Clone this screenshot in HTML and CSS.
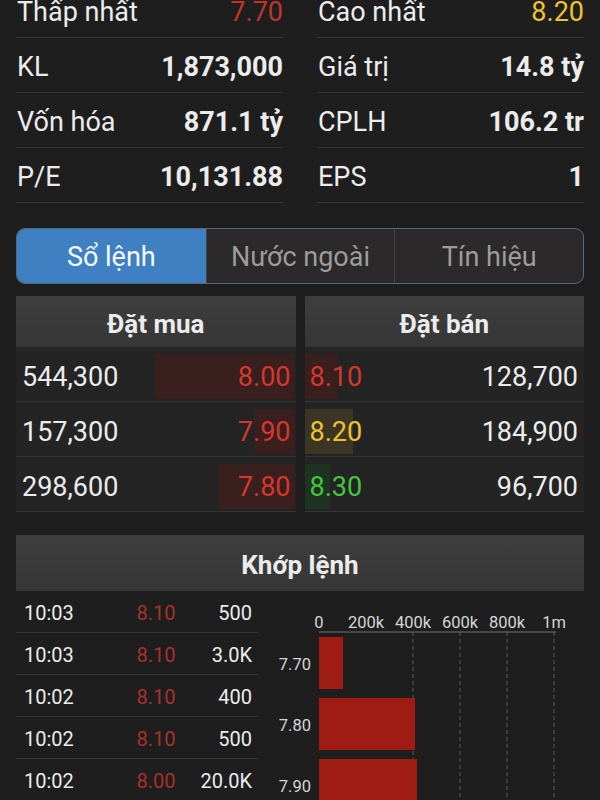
FILE: index.html
```html
<!DOCTYPE html>
<html lang="vi">
<head>
    <meta charset="UTF-8">
    <meta name="viewport" content="width=device-width, initial-scale=1.0">
    <title>Chi tiết mã</title>
    <link rel="stylesheet" href="styles.css">
</head>
<body>
    <div class="screen">
        <div class="stats">
            <div class="stat"><span class="label">Thấp nhất</span><span class="value down">7.70</span></div>
            <div class="stat"><span class="label">Cao nhất</span><span class="value ref">8.20</span></div>
            <div class="stat"><span class="label">KL</span><span class="value">1,873,000</span></div>
            <div class="stat"><span class="label">Giá trị</span><span class="value">14.8 tỷ</span></div>
            <div class="stat"><span class="label">Vốn hóa</span><span class="value">871.1 tỷ</span></div>
            <div class="stat"><span class="label">CPLH</span><span class="value">106.2 tr</span></div>
            <div class="stat"><span class="label">P/E</span><span class="value">10,131.88</span></div>
            <div class="stat"><span class="label">EPS</span><span class="value">1</span></div>
        </div>

        <div class="tabs">
            <div class="tab active">Sổ lệnh</div>
            <div class="tab">Nước ngoài</div>
            <div class="tab">Tín hiệu</div>
        </div>

        <div class="book">
            <div class="book-side buy">
                <div class="book-head">Đặt mua</div>
                <div class="book-row">
                    <span class="depth" style="width: 50%"></span>
                    <span class="qty">544,300</span><span class="price down">8.00</span>
                </div>
                <div class="book-row">
                    <span class="depth" style="width: 14.6%"></span>
                    <span class="qty">157,300</span><span class="price down">7.90</span>
                </div>
                <div class="book-row">
                    <span class="depth" style="width: 27.4%"></span>
                    <span class="qty">298,600</span><span class="price down">7.80</span>
                </div>
            </div>
            <div class="book-side sell">
                <div class="book-head">Đặt bán</div>
                <div class="book-row">
                    <span class="depth down-bg" style="width: 11.6%"></span>
                    <span class="price down">8.10</span><span class="qty">128,700</span>
                </div>
                <div class="book-row">
                    <span class="depth ref-bg" style="width: 17.2%"></span>
                    <span class="price ref">8.20</span><span class="qty">184,900</span>
                </div>
                <div class="book-row">
                    <span class="depth up-bg" style="width: 9.3%"></span>
                    <span class="price up">8.30</span><span class="qty">96,700</span>
                </div>
            </div>
        </div>

        <div class="matched">
            <div class="matched-head">Khớp lệnh</div>
            <div class="matched-body">
                <div class="trades">
                    <div class="trade"><span>10:03</span><span class="trade-price">8.10</span><span class="trade-vol">500</span></div>
                    <div class="trade"><span>10:03</span><span class="trade-price">8.10</span><span class="trade-vol">3.0K</span></div>
                    <div class="trade"><span>10:02</span><span class="trade-price">8.10</span><span class="trade-vol">400</span></div>
                    <div class="trade"><span>10:02</span><span class="trade-price">8.10</span><span class="trade-vol">500</span></div>
                    <div class="trade"><span>10:02</span><span class="trade-price">8.00</span><span class="trade-vol">20.0K</span></div>
                </div>
                <svg class="chart" width="326" height="210" viewBox="0 0 326 210">
                    <g class="grid">
                        <line x1="155" y1="41" x2="155" y2="210"/>
                        <line x1="202" y1="41" x2="202" y2="210"/>
                        <line x1="249" y1="41" x2="249" y2="210"/>
                        <line x1="296" y1="41" x2="296" y2="210"/>
                    </g>
                    <line class="axis" x1="61" y1="41" x2="298" y2="41"/>
                    <g class="ticks">
                        <text x="61" y="37">0</text>
                        <text x="108" y="37">200k</text>
                        <text x="155" y="37">400k</text>
                        <text x="202" y="37">600k</text>
                        <text x="249" y="37">800k</text>
                        <text x="296" y="37">1m</text>
                    </g>
                    <g class="bars">
                        <rect x="61" y="46" width="24" height="52"/>
                        <rect x="61" y="107" width="96" height="52"/>
                        <rect x="61" y="168" width="98" height="52"/>
                    </g>
                    <g class="cats">
                        <text x="53" y="79">7.70</text>
                        <text x="53" y="140">7.80</text>
                        <text x="53" y="201">7.90</text>
                    </g>
                </svg>
            </div>
        </div>
    </div>
</body>
</html>
```

FILE: styles.css
```css
:root {
    --bg: #1e1e1e;
    --panel: #242424;
    --line: #363636;
    --down: #d8362b;
    --ref: #eec232;
    --up: #45c43f;
    --blue: #3f80c2;
}

* {
    margin: 0;
    padding: 0;
    box-sizing: border-box;
}

html, body {
    height: 100%;
    overflow: hidden;
}

body {
    font-family: Roboto, "Noto Sans", sans-serif;
    background: var(--bg);
    color: #ececec;
}

.screen {
    padding: 0 16px;
}

/* stats */
.stats {
    display: grid;
    grid-template-columns: 1fr 1fr;
    column-gap: 34px;
    margin-top: -17px;
}

.stat {
    height: 55px;
    display: flex;
    align-items: center;
    justify-content: space-between;
    border-bottom: 1px solid var(--line);
    font-size: 27px;
    padding: 3px 0 0 1px;
}

.stat .value {
    font-weight: 700;
}

.down { color: var(--down); }
.ref { color: var(--ref); }
.up { color: var(--up); }

.stat .value.down {
    font-weight: 400;
    color: #c0342c;
}

.stat .value.ref {
    font-weight: 400;
}

/* tabs */
.tabs {
    margin-top: 25px;
    height: 56px;
    display: grid;
    grid-template-columns: repeat(3, 1fr);
    border: 1px solid #4f6b86;
    border-radius: 9px;
    overflow: hidden;
    background: #2b2929;
}

.tab {
    display: flex;
    align-items: center;
    justify-content: center;
    font-size: 27px;
    color: #9c9c9c;
    padding-top: 2px;
}

.tab + .tab {
    border-left: 1px solid #444;
}

.tab.active {
    background: var(--blue);
    color: #f4f8fc;
}

/* order book */
.book {
    margin-top: 12px;
    display: grid;
    grid-template-columns: 1fr 1fr;
    gap: 9px;
}

.book-side {
    background: var(--panel);
}

.book-head {
    height: 51px;
    display: flex;
    align-items: center;
    justify-content: center;
    background: linear-gradient(#3e3e3e, #363636);
    font-size: 26px;
    font-weight: 700;
    padding-top: 4px;
}

.book-row {
    position: relative;
    height: 55px;
    display: flex;
    align-items: center;
    justify-content: space-between;
    border-bottom: 1px solid var(--line);
    font-size: 27px;
    padding-top: 6px;
}

.buy .book-row {
    padding-left: 6px;
    padding-right: 5px;
}

.sell .book-row {
    padding-left: 5px;
    padding-right: 6px;
}

.book-row span {
    position: relative;
}

.book-row .depth {
    position: absolute;
    top: 7px;
    height: 45px;
    background: #3a1f1f;
}

.buy .depth {
    right: 1px;
}

.sell .depth {
    left: 0;
}

.depth.ref-bg { background: #3a3524; }
.depth.up-bg { background: #1f3322; }

/* matched orders */
.matched {
    margin-top: 23px;
}

.matched-head {
    height: 56px;
    display: flex;
    align-items: center;
    justify-content: center;
    background: linear-gradient(#3e3e3e, #363636);
    font-size: 26px;
    font-weight: 700;
    padding-top: 3px;
}

.matched-body {
    display: flex;
}

.trades {
    width: 242px;
}

.trade {
    height: 42px;
    display: grid;
    grid-template-columns: 104px 56px 1fr;
    align-items: center;
    border-bottom: 1px solid var(--line);
    font-size: 20px;
    padding: 2px 6px 0 8px;
}

.trade-price {
    color: #a8312a;
    text-align: center;
}

.trade-vol {
    text-align: right;
}

.chart {
    display: block;
    flex: none;
}

.chart .grid line {
    stroke: #5a5a5a;
    stroke-dasharray: 4 3;
}

.chart .axis {
    stroke: #707070;
}

.chart text {
    font-family: Roboto, sans-serif;
    font-size: 16.5px;
    fill: #d6d6d6;
}

.chart .ticks text {
    text-anchor: middle;
}

.chart .cats text {
    text-anchor: end;
}

.chart .bars rect {
    fill: #9f1c14;
}
```
